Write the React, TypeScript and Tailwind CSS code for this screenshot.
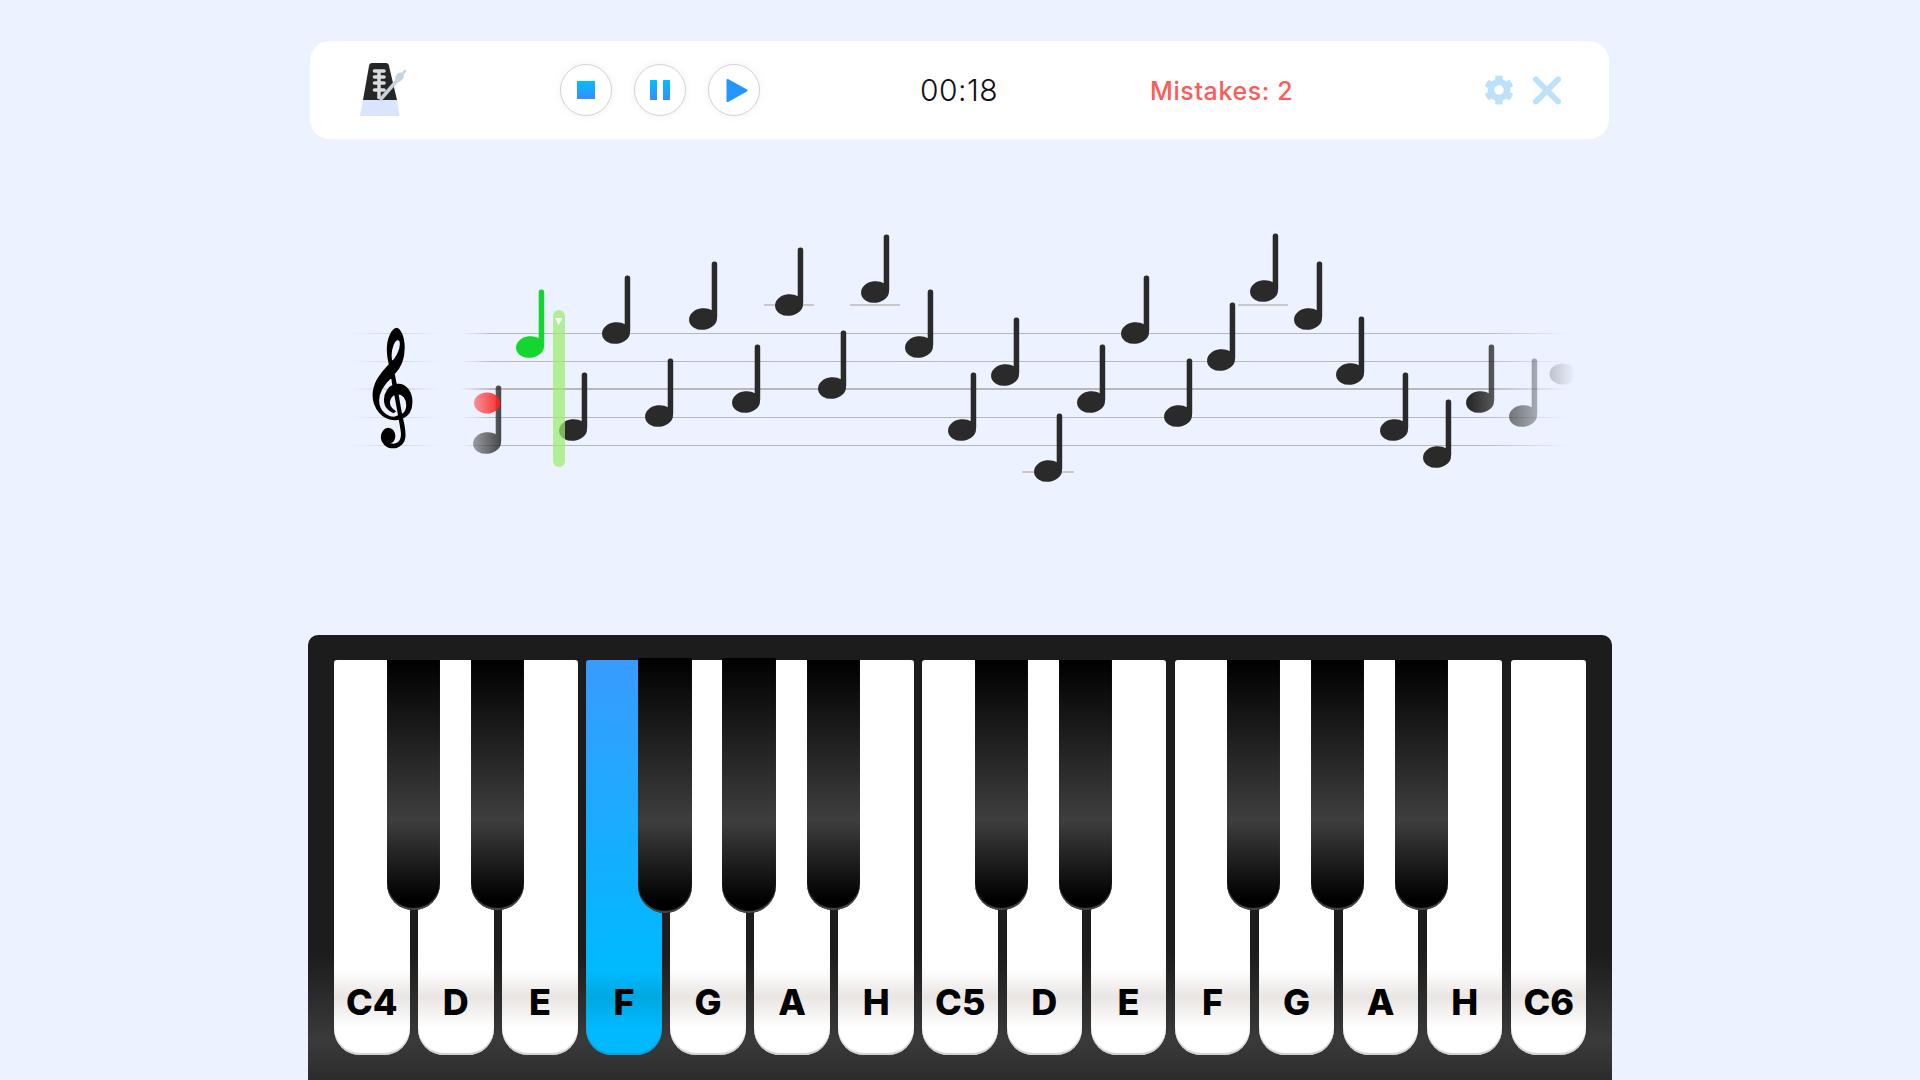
import React from 'react';
import { FaCog } from 'react-icons/fa';

const KEYS = ['C4', 'D', 'E', 'F', 'G', 'A', 'H', 'C5', 'D', 'E', 'F', 'G', 'A', 'H', 'C6'];
// white keys followed by a black one
const HAS_BLACK = [0, 1, 3, 4, 5, 7, 8, 10, 11, 12];
const ACTIVE = 3;

const STAFF = [333, 361, 389, 417, 445];

// [head x, head y]
const NOTES: [number, number][] = [
  [487, 443], [573, 430], [616, 333], [659, 416], [703, 319], [746, 402], [789, 305], [832, 388],
  [875, 292], [919, 347], [962, 430], [1005, 375], [1048, 471], [1091, 402], [1135, 333], [1178, 416],
  [1221, 360], [1264, 291], [1308, 319], [1350, 374], [1394, 430], [1437, 457], [1480, 402], [1523, 416],
];

const LEDGERS: [number, number, number][] = [
  [764, 814, 304], [850, 900, 304], [1022, 1074, 471], [1238, 1288, 304],
];

const Note = ({ x, y, fill }: { x: number; y: number; fill: string }) => (
  <g fill={fill}>
    <ellipse cx={x} cy={y} rx={14} ry={10.8} transform={`rotate(-6 ${x} ${y})`} />
    <rect x={x + 8.7} y={y - 57.5} width={5.5} height={57.5} rx={2.5} />
  </g>
);

const Metronome = () => (
  <svg width="46" height="54" viewBox="0 0 46 54">
    <path d="M3 37 9 3Q9.5 0 12 0H26Q28.5 0 29 3L37 37Z" fill="#262626" />
    <path d="M3 37H37L39.5 53H0Z" fill="#d8e5fd" />
    <path d="M19 7V36" stroke="#d8dde2" strokeWidth="3.5" />
    <g stroke="#d8dde2" strokeWidth="3.6" strokeLinecap="round">
      <path d="M14.5 8H24" />
      <path d="M14.5 14H24" />
      <path d="M14.5 20H24" />
      <path d="M14.5 27H24" />
    </g>
    <path d="M20 37 41 13" stroke="#c8d2dc" strokeWidth="3.5" />
    <path d="M41 13 45 8" stroke="#c8d2dc" strokeWidth="2.5" strokeLinecap="round" />
    <ellipse cx="39.5" cy="14" rx="3.8" ry="5" transform="rotate(40 39.5 14)" fill="#c8d2dc" />
  </svg>
);

const RoundButton = ({ children }: { children: React.ReactNode }) => (
  <button className="flex h-[52px] w-[52px] items-center justify-center rounded-full border border-[#d4d4d4] bg-white shadow-[0_0_10px_rgba(0,0,0,0.06)]">
    {children}
  </button>
);

const Score = () => (
  <svg width="1300" height="496" viewBox="310 139 1300 496" className="block">
    <defs>
      <linearGradient id="fade" gradientUnits="userSpaceOnUse" x1="445" x2="1575" y1="0" y2="0">
        <stop offset="0" stopColor="#fff" stopOpacity="0" />
        <stop offset="0.058" stopColor="#fff" stopOpacity="1" />
        <stop offset="0.907" stopColor="#fff" stopOpacity="1" />
        <stop offset="1" stopColor="#fff" stopOpacity="0" />
      </linearGradient>
      <linearGradient id="lineFade" gradientUnits="userSpaceOnUse" x1="460" x2="1570" y1="0" y2="0">
        <stop offset="0" stopColor="#b8b8b8" stopOpacity="0" />
        <stop offset="0.03" stopColor="#b8b8b8" stopOpacity="1" />
        <stop offset="0.92" stopColor="#b8b8b8" stopOpacity="1" />
        <stop offset="1" stopColor="#b8b8b8" stopOpacity="0" />
      </linearGradient>
      <linearGradient id="clefFade" gradientUnits="userSpaceOnUse" x1="350" x2="440" y1="0" y2="0">
        <stop offset="0" stopColor="#bdbdbd" stopOpacity="0" />
        <stop offset="0.5" stopColor="#bdbdbd" stopOpacity="0.55" />
        <stop offset="1" stopColor="#bdbdbd" stopOpacity="0" />
      </linearGradient>
      <linearGradient id="redFade" gradientUnits="userSpaceOnUse" x1="474" x2="500" y1="0" y2="0">
        <stop offset="0" stopColor="#ff3030" stopOpacity="0.5" />
        <stop offset="1" stopColor="#ff2020" stopOpacity="0.95" />
      </linearGradient>
      <linearGradient id="blue" x1="0" x2="0" y1="0" y2="1">
        <stop offset="0" stopColor="#00bfff" />
        <stop offset="1" stopColor="#3a8dff" />
      </linearGradient>
      <mask id="fadeMask" maskUnits="userSpaceOnUse" x="440" y="139" width="1140" height="496">
        <rect x="440" y="139" width="1140" height="496" fill="url(#fade)" />
      </mask>
    </defs>

    {STAFF.map((y) => (
      <rect key={y} x="350" y={y === 389 ? 388 : y} width="90" height={y === 389 ? 2 : 1} fill="url(#clefFade)" />
    ))}
    <text
      transform="translate(389 418) scale(0.9 1)"
      fontSize="98.6"
      textAnchor="middle"
      fontFamily="'DejaVu Sans', sans-serif"
      fill="#000"
      stroke="#000"
      strokeWidth="2.6"
    >
      𝄞
    </text>

    {STAFF.map((y) => (
      <rect key={y} x="460" y={y === 389 ? 388 : y} width="1110" height={y === 389 ? 2 : 1} fill="url(#lineFade)" />
    ))}

    <g mask="url(#fadeMask)">
      {LEDGERS.map(([a, b, y]) => (
        <rect key={a} x={a} y={y} width={b - a} height="2" fill="#c9c9cd" />
      ))}
      {NOTES.map(([x, y]) => (
        <Note key={x} x={x} y={y} fill="#2a2a2a" />
      ))}
      <ellipse cx="1563" cy="374" rx="13.5" ry="10.5" fill="#2a2a2a" />
    </g>
    <ellipse cx="487" cy="403" rx="13" ry="10.5" fill="url(#redFade)" />

    <Note x={530} y={347} fill="#14d62e" />

    <rect x="553" y="310" width="12" height="157" rx="6" fill="#9dec6f" fillOpacity="0.72" />
    <path d="M555 318H562.5L558.7 325Z" fill="#fff" />
  </svg>
);

export default function App() {
  return (
    <div className="flex h-[1080px] w-full flex-col items-center overflow-hidden bg-[#ecf2ff] pt-[41px] font-['Inter','Liberation_Sans',sans-serif]">
      <header className="mr-[1px] flex h-[98px] w-[1299px] shrink-0 items-center rounded-[20px] bg-white pl-[50px]">
        <Metronome />
        <div className="ml-[154px] flex gap-[22px]">
          <RoundButton>
            <svg width="18" height="18" viewBox="0 0 18 18">
              <rect width="18" height="18" fill="url(#blue)" />
            </svg>
          </RoundButton>
          <RoundButton>
            <svg width="20" height="20" viewBox="0 0 20 20">
              <rect width="7" height="20" rx="0.5" fill="url(#blue)" />
              <rect x="13" width="7" height="20" rx="0.5" fill="url(#blue)" />
            </svg>
          </RoundButton>
          <RoundButton>
            <svg className="ml-[6px]" width="22" height="25" viewBox="0 0 22 25">
              <path d="M1.5 2 20.5 12.5 1.5 23Z" fill="#2496ff" stroke="#2496ff" strokeWidth="2" strokeLinejoin="round" />
            </svg>
          </RoundButton>
        </div>
        <span className="ml-[160px] w-[78px] text-center text-[30px] leading-none font-light tracking-[0.5px] text-[#111111]">00:18</span>
        <span className="mt-[2px] ml-[152px] text-[25px] leading-none font-medium tracking-[0.6px] text-[#ff5a5a]">Mistakes: 2</span>
        <div className="ml-[191px] flex items-center gap-[19px] text-[#bde0fb]">
          <FaCog size={30} />
          <svg width="28" height="29" viewBox="0 0 28 29">
            <path d="M3 3.5 25 25.5M25 3.5 3 25.5" stroke="currentColor" strokeWidth="6" strokeLinecap="round" />
          </svg>
        </div>
      </header>

      <div className="h-[496px] shrink-0">
        <Score />
      </div>

      <div className="flex h-[445px] w-[1304px] shrink-0 gap-[8.47px] rounded-t-[10px] bg-[linear-gradient(180deg,#1c1c1c_0%,#1c1c1c_71.5%,#3a3a3a_91%,#2c2c2c_100%)] px-[26px] pt-[25px]">
        {KEYS.map((label, i) => (
          <div
            key={i}
            className={
              i === ACTIVE
                ? 'relative flex h-[395px] w-[75.6px] shrink-0 items-end justify-center rounded-t-[3px] rounded-b-[26px] bg-[linear-gradient(180deg,#3a9bff_0%,#00b9ff_76%,#00b9ff_78.5%,#00a8e0_85.3%,#00b9ff_93%)] pb-[35px] shadow-[inset_0_-2px_1px_#0aa0e0]'
                : 'relative flex h-[395px] w-[75.6px] shrink-0 items-end justify-center rounded-t-[3px] rounded-b-[26px] bg-[linear-gradient(180deg,#ffffff_0%,#ffffff_78.5%,#e9e5e3_85.3%,#ffffff_93%)] pb-[35px] shadow-[inset_0_-2px_1px_#d0d0d0]'
            }
          >
            <span className="text-[36px] leading-none font-extrabold text-black">{label}</span>
            {HAS_BLACK.includes(i) && (
              <div
                className={
                  i === ACTIVE || i === ACTIVE + 1
                    ? 'absolute -top-[2px] left-[52px] z-10 h-[255px] w-[54px] rounded-b-[27px] bg-[linear-gradient(180deg,#000000_0%,#3e3e3e_64%,#000000_96%)] shadow-[inset_0_-2px_1px_#4a4a4a]'
                    : 'absolute top-0 left-[52.5px] z-10 h-[250px] w-[53px] rounded-b-[26px] bg-[linear-gradient(180deg,#000000_0%,#3e3e3e_64%,#000000_96%)] shadow-[inset_0_-2px_1px_#4a4a4a]'
                }
              />
            )}
          </div>
        ))}
      </div>
    </div>
  );
}
